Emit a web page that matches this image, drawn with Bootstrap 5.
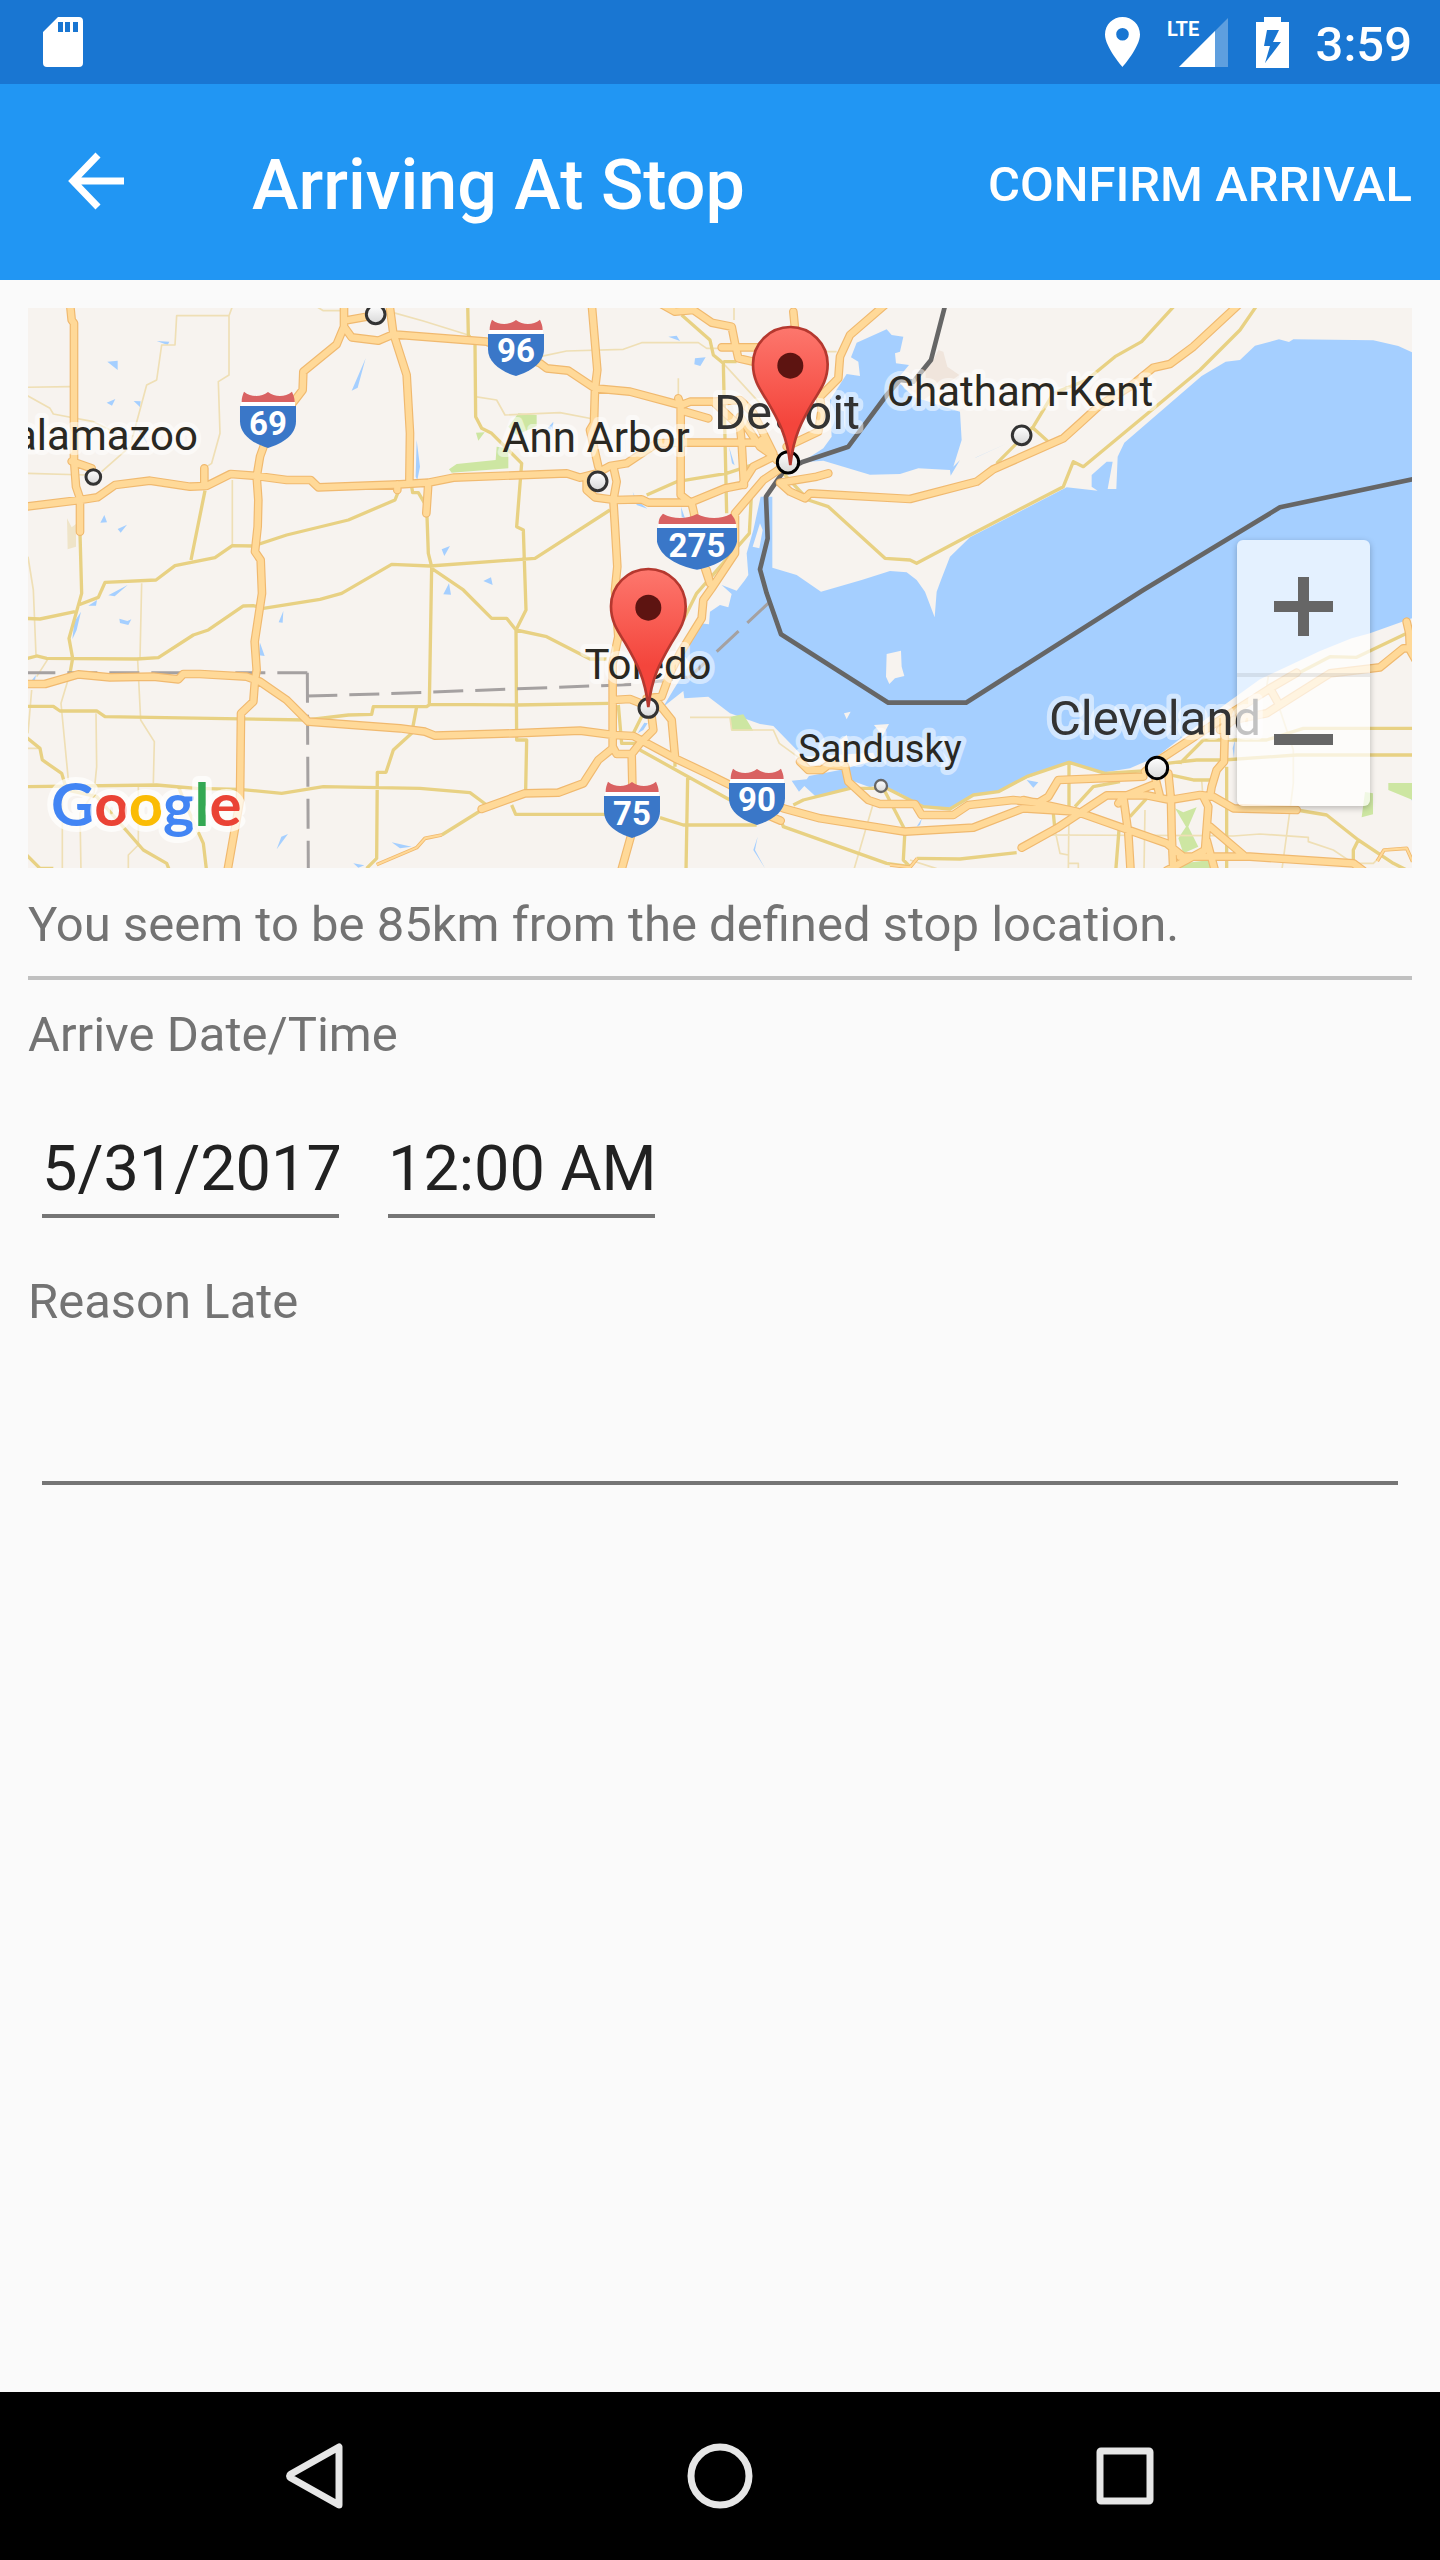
<!DOCTYPE html>
<html lang="en">
<head>
<meta charset="utf-8">
<meta name="viewport" content="width=device-width, initial-scale=1">
<title>Arriving At Stop</title>
<link href="https://cdn.jsdelivr.net/npm/bootstrap@5.3.0/dist/css/bootstrap.min.css" rel="stylesheet">
<style>
body{font-family:Roboto,"Liberation Sans",sans-serif;background:#fafafa;font-size:49px;line-height:58px;color:#737373}
svg{display:block}
.status-bar{height:84px;background:#1976d2;padding:0 28px 0 43px}
.status-set{gap:27px}
.status-set svg{overflow:visible}
.status-clock{font-weight:500;padding-top:6px}
.app-bar{height:196px;background:#2196f3;padding:0 28px 0 68px}
.app-title{font-size:70px;line-height:82px;font-weight:500;padding-top:5px;margin-left:126px}
.btn-plain{border:0;background:none;padding:0;color:inherit;font-size:49px;line-height:58px;border-radius:0}
.btn-plain:hover{color:inherit}
.confirm{font-weight:500;padding-top:5px}
.screen{padding:28px}
.map-box{height:560px;overflow:hidden;background:#f7f3ef}
.map-box>svg{width:100%;height:100%}
.zoom-pad{top:232px;right:42px;width:133px;background:rgba(255,255,255,.7);border-radius:6px;box-shadow:0 2px 6px rgba(0,0,0,.25)}
.zoom-pad button{height:133px}
.zoom-pad button+button{box-shadow:inset 0 4px rgba(0,0,0,.08)}
.rule{height:4px;background:#c0c0c0;margin:22px 0 26px}
.note{margin-top:28px}
.field{display:block;height:87px;border:0;border-bottom:4px solid #757575;border-radius:0;background:none;padding:0 0 9px;font-size:63px;line-height:74px;color:#212121;outline:0}
.field-row{padding:67px 14px 0;gap:49px}
.late{padding-top:55px}
.f-date{width:297px}
.f-time{width:267px}
.nav-keys{height:168px;background:#000}
.nav-keys button{flex:0 1 405px}
/* map drawing */
.water{fill:#a5cfff}
.land{fill:#f7f3ef}
.park{fill:#cde6a2}
.minor{stroke:#efdfb5;stroke-width:5}
.second{stroke:#e8d183;stroke-width:10}
.mway{stroke-linecap:round}
.case{stroke:#f0b96f;stroke-width:26}
.core{stroke:#ffd998;stroke-width:19}
.nation{stroke:#666;stroke-width:14}
.region{stroke:#a5a1a1;stroke-width:9;stroke-dasharray:90 36}
.town{font-size:42px;fill:#2a2822;stroke:#fff;stroke-opacity:.5;stroke-width:10px;paint-order:stroke;stroke-linejoin:round}
.city{font-size:49px;fill:#333}
.village{font-size:38px}
.sh-num{font-size:33px;font-weight:700;fill:#fff;text-anchor:middle}
.brand{font-family:Lato,sans-serif;font-size:60px;font-weight:700;stroke:#fff;stroke-opacity:.7;stroke-width:12px;paint-order:stroke;stroke-linejoin:round}
.lte{font-size:20px;font-weight:700;fill:#fff}
</style>
<script src="https://cdn.jsdelivr.net/npm/bootstrap@5.3.0/dist/js/bootstrap.bundle.min.js"></script>
</head>
<body class="d-flex flex-column min-vh-100">
<div class="status-bar d-flex align-items-center justify-content-between text-white">
  <svg width="40" height="50" viewBox="0 0 40 50" aria-hidden="true"><path fill="#fff" fill-rule="evenodd" d="M15 0H36Q40 0 40 4V46Q40 50 36 50H4Q0 50 0 46V15ZM15 5V15H20V5ZM22 5V15H27V5ZM30 5V15H35V5Z"/></svg>
  <div class="status-set d-flex align-items-center">
    <svg width="35" height="50" viewBox="0 0 35 50" aria-hidden="true"><path fill="#fff" fill-rule="evenodd" d="M17.500 0C8 0 0 7.500 0 17.500C0 30 17.500 50 17.500 50S35 30 35 17.500C35 7.500 27 0 17.500 0ZM17.500 11A6.300 6.300 0 1 1 17.500 23.600A6.300 6.300 0 1 1 17.500 11Z"/></svg>
    <svg width="62" height="50" viewBox="0 0 62 50" role="img" aria-label="LTE signal"><path fill="#fff" fill-opacity=".3" d="M12 50L61 1V50Z"/><path fill="#fff" d="M12 50L48 14V50Z"/><text class="lte" x="0" y="19">LTE</text></svg>
    <svg width="33" height="51" viewBox="0 0 33 51" aria-hidden="true"><path fill="#fff" fill-rule="evenodd" d="M8 0H25V5H33V51H0V5H8ZM11 13L8 29H14L9 46L25 25H17L23 13Z"/></svg>
    <span class="status-clock">3:59</span>
  </div>
</div>
<header class="app-bar d-flex align-items-center text-white">
  <button type="button" class="btn btn-plain" aria-label="Back"><svg width="58" height="60" viewBox="0 0 58 60"><path fill="none" stroke="#fff" stroke-width="7" d="M30 3L5 29L30 55M5 29H56"/></svg></button>
  <h1 class="app-title mb-0 text-nowrap">Arriving At Stop</h1>
  <button type="button" class="btn btn-plain confirm ms-auto text-nowrap">CONFIRM ARRIVAL</button>
</header>
<main class="screen flex-grow-1">
  <div class="map-box position-relative">
    <svg viewBox="0 0 1384 560" preserveAspectRatio="xMidYMid slice" role="img" aria-label="Map from Kalamazoo to Cleveland">
      <defs>
        <linearGradient id="pinFill" x1="0" y1="0" x2="0" y2="1"><stop offset="0" stop-color="#fd776d"/><stop offset=".7" stop-color="#f4453c"/><stop offset="1" stop-color="#f4453c"/></linearGradient>
        <linearGradient id="dotFill" x1="0" y1="0" x2="0" y2="1"><stop offset="0" stop-color="#fff"/><stop offset="1" stop-color="#d8d8d8"/></linearGradient>
        <g id="pin"><path fill="url(#pinFill)" stroke="#b5382f" stroke-width="8" d="M0 298C-10 210 -35 165 -70 105C-95 65 -112 40 -112 -4A112 112 0 0 1 112 -4C112 40 95 65 70 105C35 165 10 210 0 298Z"/><circle r="39" fill="#5d1411"/></g>
        <g id="shield"><path fill="#d96262" d="M-72 -84C-50 -66 -20 -68 0 -83C20 -68 50 -66 72 -84C76 -74 80 -66 80 -53H-79C-79 -66 -76 -74 -72 -84Z"/><path fill="#fff" d="M-80 -53H81V-41H-82Z"/><path fill="#3a77c8" d="M-84 -41H84V5C84 45 45 72 0 85C-45 72 -84 45 -84 5Z"/></g>
        <g id="wideShield"><path fill="#d96262" d="M-102 -84C-70 -66 -30 -68 0 -83C30 -68 70 -66 102 -84C110 -74 116 -66 117 -53H-115C-115 -66 -112 -74 -102 -84Z"/><path fill="#fff" d="M-116 -53H118V-41H-118Z"/><path fill="#3a77c8" d="M-120 -41H120V0C110 45 60 72 0 84C-60 72 -110 45 -120 0Z"/></g>
        <path id="mways" d="M150 10L155 60L162 70V480L168 560L180 595V695M155 484L215 505M553 505V558M10 621L180 600L232 592L285 555L390 542L510 560L560 558L632 522L710 528L800 540H872L895 562L1140 553L1225 548L1300 533L1640 520L1680 533L1730 520L1770 498L1820 490L1910 430L1980 428H2220M972 10V80L950 133L850 215L848 270L825 300L745 400L720 470L710 530L715 600L713 680L705 755L722 780L726 880L704 1025L710 1110L705 1140L700 1205L663 1240L660 1500L622 1715M972 80L995 112L1075 122L1120 103M985 60L1040 50M1108 10L1120 100L1160 225L1170 400L1168 550M1120 103L1400 125L1560 190L1580 205L1645 212L1725 265L1830 275L1980 315M1715 10L1732 210L1725 265L1722 370L1710 390L1735 500M1780 500L1790 545L1780 600L1785 680L1792 800L1785 870L1795 1010L1778 1090V1340M1975 295L1982 315V585L2015 610L2022 640L2040 760L2070 850M1132 570V553M1225 550L1219 640M1735 520L1700 540V570L1725 592L1785 600L1865 598L1885 608H2010L2115 565L2165 555L2200 500L2260 470M1985 315L2010 305H2085L2160 300L2200 340L2260 460M1995 335L2065 355M2085 310L2160 380L2165 428L2172 555M2160 350L2220 440L2270 475M2225 420L2270 480M1920 10L1965 35L2020 30L2075 68L2135 80L2145 130L2155 175L2200 185M2105 142H2220M2290 500L2230 540L2145 640V760L2075 865L2050 900L2045 955L1980 1060L1950 1120L1925 1190L1880 1195M2070 850L2060 810M1915 1210L1955 1260L1965 1370M2300 440L2395 395L2405 330L2400 290L2455 235L2460 170L2490 105L2600 10M2320 35L2325 85M2425 520L2390 530L2280 548L2310 575L2355 595L2370 580L2670 597L2870 545L2920 508L3130 415L3180 370L3240 315L3330 260L3400 203L3450 192L3520 140L3660 10M10 1152H75L175 1123L270 1132L400 1130L475 1138L490 1122H540L680 1130L720 1145L800 1200L865 1265L1140 1285L1215 1295L1245 1307L1480 1300L1680 1292L1780 1305L1840 1308L1965 1375L2060 1420L2130 1455L2290 1525L2400 1555L2655 1595L2860 1583L3010 1525L3170 1535M2230 1540L2282 1562M1778 1340L1790 1362H1835L1860 1330L1900 1290L1895 1250L1885 1225M1778 1200L1830 1197L1875 1215M1835 1362L1837 1450L1835 1600L1803 1715M1778 1345L1735 1380L1690 1450L1615 1478L1515 1480L1385 1527M2340 1385L2365 1410H2405L2425 1395L2475 1398L2485 1445L2545 1500L2580 1512H2685L2705 1545H2800L2845 1515L2980 1500L3055 1508L3085 1490L3115 1440L3370 1430M3005 1643L3110 1585L3260 1486H3380L3450 1500L3540 1485L3580 1490L3640 1525L3830 1530M3010 1500L3170 1535L3340 1595L3440 1630L3490 1670M3375 1415L3410 1385L3600 1260L3750 1165L3830 1118M3600 1290L3640 1260L3740 1240L3930 1120L4080 1102L4150 1045H4175M3750 1165L3775 1210M4160 965L4168 1000L4170 1050L4190 1085M3615 1270L3612 1385L3590 1410L3575 1460L3570 1490M3310 1490L3325 1600L3332 1715M3445 1420L3453 1500L3455 1600L3460 1715M3550 1490L3565 1520L3555 1650L3500 1680L3440 1712M3295 1510L3310 1490M3570 1580L3670 1665M3560 1620L3585 1712M3480 1670H3690L4000 1690L4030 1712M3405 1430L3420 1490M3310 1490L3410 1450"/>
      </defs>
      <g transform="translate(-8 -8) scale(.33333)" fill="none" stroke-linejoin="round">
        <path class="water" d="M2222 590H2257V803L2330 825L2403 875L2525 840L2610 813L2660 817L2690 840L2715 875L2744 952L2750 875L2763 840L2790 770L2850 712L3140 562L3233 572L3215 560V525L3260 485H3278L3263 567H3289L3293 470L3313 428L3545 228L3617 185L3660 180L3705 137L3777 118L3807 126L3820 118L4060 121L4135 138L4190 163V950L4050 1000L3995 1015L3900 1053L3800 1100L3720 1138L3620 1210L3410 1370L3330 1405L3255 1417L3145 1385L3020 1435L2935 1475L2860 1485L2785 1525L2710 1520L2640 1480L2570 1455L2550 1462L2490 1440L2500 1462L2388 1490L2353 1458L2337 1475L2315 1442L2360 1438L2367 1428L2460 1410L2570 1380L2560 1358L2350 1370L2260 1278L2220 1272L2130 1240L2065 1190L1993 1195L1990 1173L1930 1220L1960 1170L2010 1090L1980 1050L2040 970L2067 973L2070 935L2100 915L2125 922L2135 882L2105 855L2150 872L2175 840L2185 825L2180 760L2200 690Z"/>
        <path class="water" d="M2345 487L2410 445L2435 410L2430 300L2480 222L2520 228L2515 185L2493 172L2510 128L2600 88L2615 105L2650 110L2640 155L2625 160L2628 190L2667 195L2630 240L2680 290L2820 335L2825 420L2800 500L2820 480L2792 527L2790 510L2695 505L2640 522L2550 524L2410 482ZM262 185L293 182V210ZM410 123L448 125L443 135ZM260 308L286 297L276 317ZM341 303L362 304L360 321ZM355 390L366 392L382 432ZM1037 175L1013 263L995 272ZM241 668L253 645L261 667ZM293 687L321 674L302 698ZM265 886L323 855L284 889ZM205 917L231 900L228 917ZM183 935L170 990L157 1018L163 965ZM298 956L322 963L334 958L325 975L300 969ZM776 967L790 933L788 968ZM720 1028L734 1068L717 1066ZM36 1140L48 1125L45 1140ZM770 1648L784 1610L804 1602ZM1000 1690L1033 1696L1015 1703ZM1190 420L1200 500L1192 540L1187 530ZM1265 748L1290 738L1273 768ZM1390 843L1413 832L1418 855ZM1270 883L1287 850L1293 884ZM1945 110L1970 107L1980 123ZM2025 175L2057 172L2041 198L2023 193ZM1838 575L1850 600L1882 626L1850 615ZM2127 440L2144 496L2136 490ZM1983 620L1995 655L1985 650ZM1583 384L1600 365L1598 392ZM1853 1300L1873 1268L1883 1270L1870 1290ZM1115 1627L1175 1640L1140 1645ZM2862 475L2965 428L2870 472ZM3020 1440L3055 1447L3040 1463ZM2690 1580L2706 1555L2700 1575ZM3645 1320L3642 1375L3638 1345ZM2213 1610L2205 1650L2235 1705L2200 1650ZM4165 1480H4190V1530Z"/>
        <path class="land" d="M2220 670L2228 690L2218 745L2198 740ZM2600 1062L2643 1052L2645 1100L2653 1128L2625 1135L2608 1152L2598 1130ZM2472 1240L2492 1235L2480 1258ZM2562 1275L2607 1272L2588 1308ZM2460 1320L2480 1305L2490 1340L2470 1370Z"/>
        <path class="park" d="M1495 340L1550 345V378L1490 405L1465 380ZM1430 440L1465 445V505L1295 518L1287 508L1310 492L1427 480ZM1368 398L1394 397L1375 422ZM2130 1250L2170 1243L2200 1292H2135ZM3465 1525L3490 1537L3530 1522L3505 1580L3535 1640L3490 1660L3475 1615L3498 1580ZM3490 1690L3570 1680V1710H3480ZM4105 1449H4190L4185 1503L4105 1470ZM4035 1476L4059 1480V1543L4025 1552Z"/>
        <path fill="#efe4c8" d="M141 655L155 682L168 672V740L143 748Z"/>
        <path fill="#f0e5dc" d="M2755 150L2770 155L2782 200L2818 225L2710 300L2660 260L2735 190Z"/>
        <path class="minor" d="M10 262L150 260M10 280L90 325L100 342L220 365L290 400M10 520L200 525M245 515L330 440L380 255L410 240L425 135H465L470 47H627V225L595 245L600 400L575 490L560 500M627 47L637 20M637 540V735M24 770L40 870L48 1065M365 850L360 1075M353 1080L362 1260L403 1325L400 1450M228 1240L230 1400L222 1480M150 1120L123 1210L145 1440M85 1075L50 1130M35 1170L24 1300M355 1460V1635L325 1665V1715M127 1480V1715M220 1480L180 1540L183 1715M24 1345H60M890 20L910 32H970M1120 38L1210 63L1345 105M1560 170L1640 153L1810 148L1865 128H2035L2060 145H2110M1365 290L1430 300L1455 345L1620 338L1720 357M1975 235V290M2142 20V60M2400 155H2450M2110 190L2220 310M2010 1252H2130L2135 1290H2260L2278 1330L2340 1375M2560 1510L2500 1715M2670 1680L2750 1706M3147 1530L3145 1715M3090 1605L3560 1607L3640 1608L3720 1602L3865 1612V1625L3940 1650L4000 1690H4060L4080 1670M3145 1690H3175V1715M3105 1590L3120 1660L3145 1665M3375 1530L3372 1715M3545 1440L3548 1480M3745 1130L3740 1160M3780 1230L3820 1350V1450L3810 1530L3785 1715"/>
        <path class="second" d="M555 572L513 780M245 870L255 847L408 840L465 797L585 773L637 737L700 738L800 705L985 660L1125 600L1135 575M180 700L185 880L147 1015L158 1075L150 1120M10 955L60 957L165 935M175 915L235 892L255 847M10 1078L50 1068L80 1075L350 1077L415 1073L520 1005L565 990L670 918L700 917L730 925L900 898L965 880L1115 793L1230 798L1545 775L1770 630M10 1219H100L120 1233H230L255 1250L860 1260L985 1245L1055 1243L1060 1220H1220L1230 1213L1490 1215L1765 1210M10 1460L410 1455L530 1465L660 1468L785 1480L910 1460L1200 1465L1350 1478L1400 1515M1190 1220L1175 1300L1120 1350L1098 1417H1072L1070 1675L1040 1705M10 1305L60 1345L67 1380L125 1420L140 1470L230 1490L370 1650L440 1690L450 1715M10 1655L60 1705H100M475 1460L500 1520L550 1630L560 1715M1343 10L1345 105L1365 130L1367 350L1385 385L1415 400L1505 490L1490 680L1510 690L1515 840L1518 930L1488 990L1490 1320H1520L1517 1470M1175 560L1178 578H1195L1220 620L1225 760L1235 800L1228 1215M1235 805L1330 870L1415 955H1460L1488 990L1580 1010L1710 1077H1760M1880 585L1970 545L2120 520L2240 480M1985 45L2070 120L2080 165L2110 190L2120 640M2110 185H2150M2195 570L2188 700L2030 880L1990 960M2290 520L2365 600L2425 620L2595 775L2670 780L2690 790L2850 705L3130 560L3160 485L3190 500L3540 210L3660 90L3715 10M2930 490L3040 380L3100 280L3200 240L3285 170L3365 125L3470 10M3035 380L3085 425M1475 1515L1487 1543H1760M1920 1553L1990 1575H2210M2003 1430L1998 1715M1860 1350L2130 1500M1965 1375V1400M1795 1215L1805 1330H1850M1870 1240L1840 1300M1385 1530L1265 1605M2280 1550L2290 1580L2600 1690L2670 1700M2320 1515L2350 1500L2490 1465L2600 1465L2710 1520L2790 1527L2860 1485L2935 1475L3020 1430L3147 1387L3255 1420L3380 1412M2590 1465L2655 1590L2650 1680L2670 1700M2690 1675L2820 1677L2990 1658M3147 1390V1530M3100 1540L3105 1590M3165 1520L3220 1460L3300 1445M3440 1390L3530 1380H3610L3830 1365H4190M3430 1420L3520 1440H3570M3620 1400V1715M3480 1390L3550 1320L3740 1320L3850 1285H4190M3835 1120L3930 1070L4010 1072L4170 995M3830 1530L3920 1545L4015 1620L4120 1690L4160 1710M4015 1620L4000 1650V1680M3297 1590L3287 1715M3330 1550L3380 1495"/>
        <path class="region" d="M862 1118H10M862 1118L865 1715M862 1188L1080 1182L1850 1153L2010 1130L2250 905"/>
        <path class="nation" d="M2777 10L2733 180L2680 245L2640 240L2600 285L2485 440L2345 487L2290 515L2238 590L2243 715L2220 808L2240 880L2283 1003L2605 1208H2838L3370 870L3780 622L4190 535"/>
        <use href="#mways" class="mway case"/>
        <use href="#mways" class="mway core"/>
        <path stroke="#f0b96f" stroke-width="11" d="M1070 1694L1190 1643L1215 1615L1265 1605M2610 1695L2670 1702L2692 1675M4072 1683L4092 1650L4160 1645L4178 1685"/>
        <path stroke="#ffd998" stroke-width="6" d="M1070 1694L1190 1643L1215 1615L1265 1605M2610 1695L2670 1702L2692 1675M4072 1683L4092 1650L4160 1645L4178 1685"/>
        <g fill="url(#dotFill)" stroke="#333" stroke-width="9">
          <circle cx="220" cy="531" r="22"/><circle cx="1067" cy="43" r="28"/><circle cx="1733" cy="544" r="28"/><circle cx="3005" cy="406" r="28"/><circle cx="1885" cy="1224" r="28"/>
          <circle cx="2583" cy="1458" r="18" stroke="#666" stroke-width="7"/>
          <circle cx="2304" cy="487" r="32" stroke="#000"/><circle cx="3411" cy="1404" r="32" stroke="#000"/>
        </g>
        <use href="#shield" x="744" y="359"/><use href="#shield" x="1488" y="143"/><use href="#wideShield" x="2031" y="725"/><use href="#shield" x="1836" y="1529"/><use href="#shield" x="2211" y="1490"/>
      </g>
      <g class="sh-num"><text x="240" y="127">69</text><text x="488" y="54">96</text><text x="669" y="249">275</text><text x="604" y="517">75</text><text x="729" y="503">90</text></g>
      <text class="town" x="170" y="142" text-anchor="end">alamazoo</text>
      <text class="town" x="568" y="144" text-anchor="middle">Ann Arbor</text>
      <text class="town" x="992" y="98" text-anchor="middle">Chatham-Kent</text>
      <text class="town" x="620" y="371" text-anchor="middle">Toledo</text>
      <text class="town village" x="852" y="454" text-anchor="middle">Sandusky</text>
      <text class="town city" x="759" y="121" text-anchor="middle">Detroit</text>
      <text class="town city" x="1127" y="427" text-anchor="middle">Cleveland</text>
      <text class="brand" x="23" y="518"><tspan fill="#4285f4">G</tspan><tspan fill="#ea4335">o</tspan><tspan fill="#fbbc05">o</tspan><tspan fill="#4285f4">g</tspan><tspan fill="#34a853">l</tspan><tspan fill="#ea4335">e</tspan></text>
      <g transform="translate(-8 -8) scale(.33333)"><use href="#pin" x="2311" y="197"/><use href="#pin" x="1885" y="923"/></g>
    </svg>
    <div class="zoom-pad position-absolute d-flex flex-column">
      <button type="button" class="btn-plain d-flex align-items-center justify-content-center" aria-label="Zoom in"><svg width="59" height="59" viewBox="0 0 59 59"><path fill="#666" d="M24 0H35V24H59V35H35V59H24V35H0V24H24Z"/></svg></button>
      <button type="button" class="btn-plain d-flex align-items-center justify-content-center" aria-label="Zoom out"><svg width="59" height="59" viewBox="0 0 59 59"><path fill="#666" d="M0 24H59V35H0Z"/></svg></button>
    </div>
  </div>
  <p class="note mb-0">You seem to be 85km from the defined stop location.</p>
  <div class="rule"></div>
  <form>
    <label class="d-block" for="arriveDate">Arrive Date/Time</label>
    <div class="field-row d-flex">
      <input class="field f-date" id="arriveDate" type="text" value="5/31/2017">
      <input class="field f-time" id="arriveTime" type="text" value="12:00 AM" aria-label="Arrive time">
    </div>
    <label class="d-block late" for="reasonLate">Reason Late</label>
    <div class="field-row d-flex">
      <input class="field w-100" id="reasonLate" type="text">
    </div>
  </form>
</main>
<nav class="nav-keys d-flex justify-content-center" aria-label="System">
  <button type="button" class="btn-plain d-flex align-items-center justify-content-center" aria-label="Back"><svg width="58" height="66" viewBox="0 0 58 66"><path fill="none" stroke="#e6e6e6" stroke-width="7" stroke-linejoin="round" d="M53 4V62L5 35Q2 33 5 31Z"/></svg></button>
  <button type="button" class="btn-plain d-flex align-items-center justify-content-center" aria-label="Home"><svg width="66" height="66" viewBox="0 0 66 66"><circle cx="33" cy="33" r="29" fill="none" stroke="#e6e6e6" stroke-width="7"/></svg></button>
  <button type="button" class="btn-plain d-flex align-items-center justify-content-center" aria-label="Recent apps"><svg width="58" height="58" viewBox="0 0 58 58"><rect x="4" y="4" width="50" height="50" rx="1" fill="none" stroke="#e6e6e6" stroke-width="7" stroke-linejoin="round"/></svg></button>
</nav>
</body>
</html>
